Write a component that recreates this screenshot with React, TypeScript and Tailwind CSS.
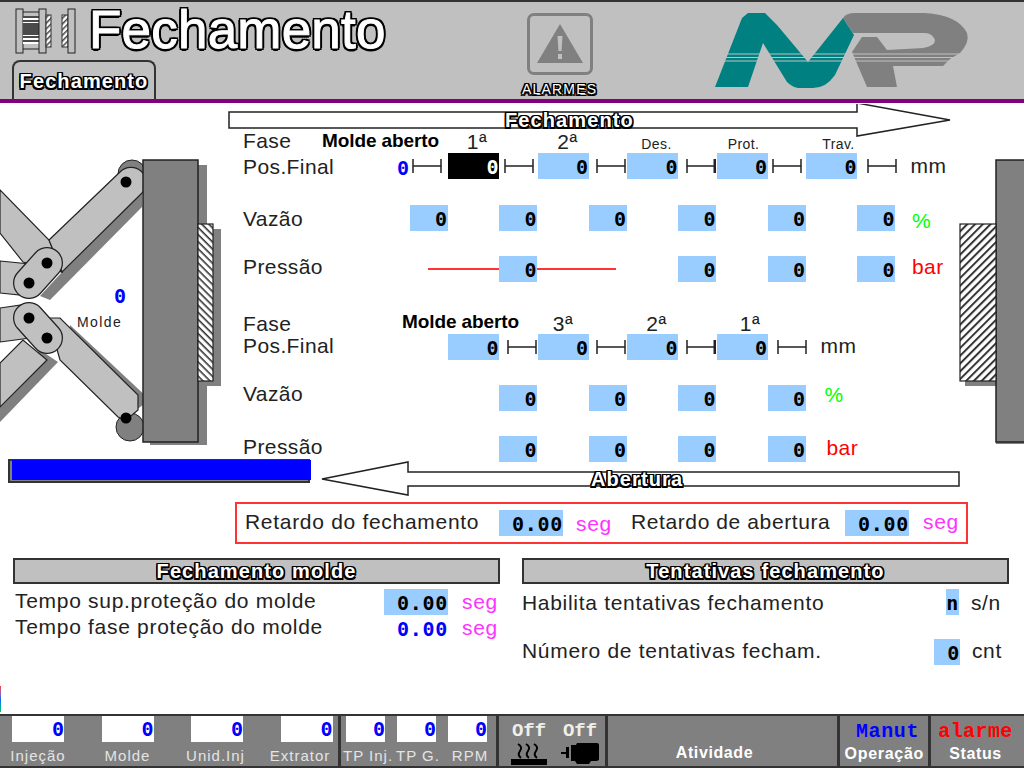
import React from 'react';

const outline = "text-white font-bold [text-shadow:-1.5px_0_#000,1.5px_0_#000,0_-1.5px_#000,0_1.5px_#000,-1.5px_-1.5px_#000,1.5px_-1.5px_#000,-1.5px_1.5px_#000,1.5px_1.5px_#000]";
const outlineBig = "text-white [-webkit-text-stroke:1px_#fff] [text-shadow:-2.5px_0_#000,2.5px_0_#000,0_-2.5px_#000,0_2.5px_#000,-2px_-2px_#000,2px_-2px_#000,-2px_2px_#000,2px_2px_#000]";
const mono = "font-['DejaVu_Sans_Mono',monospace] font-bold text-[20px] leading-none";

function Field({ value = '0', w = 'w-[38px]', dark = false }: { value?: string; w?: string; dark?: boolean }) {
  return (
    <div className={`${w} h-[26px] shrink-0 flex items-end justify-end pb-[2px] ${mono} ${dark ? 'bg-black text-white' : 'bg-[#99ccff] text-black'}`}>
      {value}
    </div>
  );
}

function Span({ thick = false, className = '' }: { thick?: boolean; className?: string }) {
  return (
    <svg width="30" height="14" viewBox="0 0 30 14" className={`shrink-0 ${className}`}>
      <path d="M1 0V14M1 7H29" stroke="#222" strokeWidth="1.5" fill="none" />
      <path d="M29 0V14" stroke="#222" strokeWidth={thick ? 3 : 1.5} fill="none" />
    </svg>
  );
}

function Row({ label, children, className = '' }: { label: React.ReactNode; children?: React.ReactNode; className?: string }) {
  return (
    <div className={`grid grid-cols-[166.5px_repeat(6,89.5px)] items-center text-[21px] leading-none tracking-[0.4px] text-[#222] ${className}`}>
      {label}
      {children}
    </div>
  );
}

function Cell({ children }: { children?: React.ReactNode }) {
  return <div className="flex items-center">{children}</div>;
}

function PhaseLabel({ text, className = '' }: { text: string; className?: string }) {
  return <div className={`ml-[38.5px] w-[51px] text-center whitespace-nowrap ${className}`}>{text}</div>;
}

function Diagram() {
  return (
    <svg className="absolute left-0 top-0" width="1024" height="400" viewBox="0 104 1024 400">
      <defs>
        <pattern id="hatchL" width="5" height="5" patternUnits="userSpaceOnUse" patternTransform="rotate(45)">
          <rect width="5" height="5" fill="#fff" />
          <rect width="5" height="1.6" fill="#333" />
        </pattern>
        <pattern id="hatchR" width="5.5" height="5.5" patternUnits="userSpaceOnUse" patternTransform="rotate(-45)">
          <rect width="5.5" height="5.5" fill="#fff" />
          <rect width="5.5" height="2" fill="#333" />
        </pattern>
      </defs>

      {/* Fechamento arrow */}
      <path d="M229 112H857V103L950 120L857 136V128H229Z" fill="#fff" stroke="#222" strokeWidth="1.5" />
      {/* Abertura arrow */}
      <path d="M959 472H408V462L322 479L408 495V486H959Z" fill="#fff" stroke="#222" strokeWidth="1.5" />

      {/* shadows */}
      <rect x="150" y="165" width="57" height="280" fill="#808080" />
      <rect x="205" y="229" width="16" height="157" fill="#808080" />
      <path d="M62 272L142 193V207L50 300L40 296Z" fill="#808080" />
      <path d="M68 362L122 420L150 400L70 325Z" fill="#808080" />
      <path d="M0 422L58 362L40 350L0 392Z" fill="#808080" />
      <circle cx="132" cy="174" r="14" fill="#808080" stroke="#222" />
      <circle cx="130" cy="427" r="14" fill="#808080" stroke="#222" />

      {/* back arms */}
      <path d="M0 190L49 240L62 272L23 262L0 233Z" fill="#c0c0c0" stroke="#222" strokeWidth="1.2" />
      <path d="M0 363L23 340L47 360L0 407Z" fill="#c0c0c0" stroke="#222" strokeWidth="1.2" />
      <path d="M0 261L30 264V296L0 293Z" fill="#c0c0c0" stroke="#222" strokeWidth="1.2" />
      <path d="M0 308L28 304L30 338L0 342Z" fill="#c0c0c0" stroke="#222" strokeWidth="1.2" />

      {/* long links */}
      <path d="M49 240L120 172A15 15 0 0 1 142 193L62 272Z" fill="#c0c0c0" stroke="#222" strokeWidth="1.2" />
      <path d="M48 318H60L138 395V410L126 420L118 417L60 360Z" fill="#c0c0c0" stroke="#222" strokeWidth="1.2" />

      {/* short links */}
      <line x1="47" y1="263" x2="29" y2="283" stroke="#222" strokeWidth="32" strokeLinecap="round" />
      <line x1="47" y1="263" x2="29" y2="283" stroke="#c0c0c0" strokeWidth="29.5" strokeLinecap="round" />
      <line x1="29" y1="318" x2="47" y2="338" stroke="#222" strokeWidth="32" strokeLinecap="round" />
      <line x1="29" y1="318" x2="47" y2="338" stroke="#c0c0c0" strokeWidth="29.5" strokeLinecap="round" />

      {/* pins */}
      <circle cx="126" cy="182" r="5.5" fill="#000" />
      <circle cx="47" cy="263" r="5.5" fill="#000" />
      <circle cx="29" cy="283" r="5.5" fill="#000" />
      <circle cx="29" cy="318" r="5.5" fill="#000" />
      <circle cx="47" cy="338" r="5.5" fill="#000" />
      <circle cx="126" cy="418" r="5.5" fill="#000" />

      {/* left platen */}
      <rect x="143" y="160" width="55" height="282" fill="#808080" stroke="#222" strokeWidth="1.5" />
      <rect x="198" y="224" width="15" height="157" fill="url(#hatchL)" stroke="#222" strokeWidth="1.2" />

      {/* right platen */}
      <rect x="965" y="381" width="32" height="5" fill="#808080" />
      <rect x="996" y="442" width="28" height="2" fill="#808080" />
      <rect x="996" y="160" width="30" height="282" fill="#808080" stroke="#222" strokeWidth="1.5" />
      <rect x="960" y="224" width="36" height="157" fill="url(#hatchR)" stroke="#222" strokeWidth="1.2" />
    </svg>
  );
}

function ToggleIcon() {
  return (
    <svg width="62" height="46" viewBox="0 0 62 46" className="shrink-0">
      <defs>
        <pattern id="hatchT" width="4" height="4" patternUnits="userSpaceOnUse" patternTransform="rotate(-45)">
          <rect width="4" height="4" fill="#fff" />
          <rect width="4" height="1.5" fill="#444" />
        </pattern>
      </defs>
      <rect x="1" y="1" width="7" height="44" fill="#c0c0c0" stroke="#222" />
      <rect x="8" y="8" width="16" height="28" fill="#fff" />
      <path d="M8 9H24M8 13H24M8 16H24M8 18H24M8 20H24M8 22H24M8 24H24M8 26H24M8 29H24M8 33H24" stroke="#111" strokeWidth="1.5" />
      <path d="M8 4H24M8 41H24" stroke="#222" />
      <rect x="24" y="1" width="7" height="44" fill="#c0c0c0" stroke="#222" />
      <rect x="31" y="7" width="5" height="32" fill="url(#hatchT)" stroke="#333" />
      <rect x="47" y="7" width="6" height="32" fill="url(#hatchT)" stroke="#333" />
      <rect x="53" y="1" width="7" height="44" fill="#c0c0c0" stroke="#222" />
      <path d="M60.5 1V45" stroke="#00c000" strokeWidth="1" />
    </svg>
  );
}

function Logo() {
  return (
    <svg width="256" height="80" viewBox="714 12 256 80" className="shrink-0">
      <path d="M843 18Q846 13 855 13H925Q958 15 967 33Q970 42 960 53L950 59L943 66H893L897 87H867L852 52L862 37H877L887 50L923 48Q935 46 935 40Q932 33 925 33H853Z" fill="#808080" />
      <path d="M715 87L742 18L748 13H765L777 25L808 62L843 18L854 35L835 75Q826 88 813 88H798Q792 87 787 82L763 43L748 87Z" fill="#008080" />
      <path d="M720 54H960M720 57.5H960M720 61H960" stroke="#c0c0c0" strokeWidth="1.2" />
    </svg>
  );
}

function HeaterIcon() {
  return (
    <svg width="36" height="22" viewBox="0 0 36 22" stroke="#000" fill="none" strokeWidth="2">
      <path d="M7 1Q12 4 9 8T10 15M15 1Q20 4 17 8T18 15M23 1Q28 4 25 8T26 15" />
      <rect x="0" y="17" width="36" height="4" fill="#000" />
    </svg>
  );
}

function MotorIcon() {
  return (
    <svg width="38" height="22" viewBox="0 0 38 22" fill="#000">
      <rect x="0" y="9" width="6" height="2" />
      <rect x="5" y="4" width="3" height="11" />
      <path d="M10 2H15L16 0H36Q38 0 38 2V16Q38 18 34 18H30L28 21H16L14 18H10Z" />
    </svg>
  );
}

function FooterField({ value, w, label, labelClass = '' }: { value: string; w: string; label: string; labelClass?: string }) {
  return (
    <div className={`${w} flex flex-col items-center shrink-0`}>
      <div className={`w-full h-[26px] bg-white flex items-center justify-end text-[#0000ff] ${mono}`}>{value}</div>
      <div className={`mt-[5px] whitespace-nowrap text-[15px] leading-[18px] tracking-[1px] text-[#e4e4e4] ${labelClass}`}>{label}</div>
    </div>
  );
}

function PanelHeader({ title }: { title: string }) {
  return (
    <div className="h-[26px] border-2 border-[#333] bg-[#c0c0c0] flex items-center justify-center">
      <span className={`${outline} text-[20px] leading-none tracking-[1.1px]`}>{title}</span>
    </div>
  );
}

export default function App() {
  return (
    <div className="w-[1024px] h-[768px] flex flex-col overflow-hidden bg-white font-['Liberation_Sans',sans-serif]">
      {/* header */}
      <header className="h-[104px] shrink-0 flex flex-col">
        <div className="h-[99px] bg-[#c0c0c0] border-t-2 border-[#333] flex">
          <div className="w-[522px] shrink-0 pl-[12px] flex flex-col">
            <div className="h-[58px] flex items-start pl-[3px] pt-[6px]">
              <ToggleIcon />
              <span className={`ml-[12px] -mt-[8px] ${outlineBig} text-[53px] leading-[60px] tracking-[0.2px]`}>Fechamento</span>
            </div>
            <div className="mt-auto w-[144px] h-[39px] border-2 border-b-0 border-[#333] rounded-t-[8px] flex items-center justify-center">
              <span className={`${outline} text-[20px] leading-none tracking-[1.1px]`}>Fechamento</span>
            </div>
          </div>
          <div className="w-[192px] shrink-0 flex flex-col">
            <div className="ml-[5px] mt-[11px] w-[66px] h-[62px] border-[3px] border-[#808080] rounded-[7px] flex items-center justify-center">
              <svg width="46" height="40" viewBox="0 0 46 40">
                <path d="M23 0L46 39H0Z" fill="#808080" />
                <path d="M20.5 12H25.5L24.5 27H21.5ZM21 30H25V35H21Z" fill="#c0c0c0" />
              </svg>
            </div>
            <span className={`mt-[7px] ${outline} font-normal text-[14px] leading-none tracking-[1.2px]`}>ALARMES</span>
          </div>
          <div className="pt-[10px]">
            <Logo />
          </div>
        </div>
        <div className="h-[4px] bg-[#800080]" />
      </header>

      {/* main */}
      <main className="relative flex-1">
        <Diagram />
        <span className={`absolute left-[505px] top-[5px] ${outline} text-[20px] leading-[22px] tracking-[1.1px]`}>Fechamento</span>
        <span className={`absolute left-[591px] top-[364px] ${outline} text-[20px] leading-[22px] tracking-[1.1px]`}>Abertura</span>
        <span className={`absolute left-[114px] top-[182px] text-[#0000ff] ${mono}`}>0</span>
        <span className="absolute left-[77px] top-[210px] text-[14px] leading-[16px] tracking-[1.4px] text-[#222]">Molde</span>
        <div className="absolute left-[8px] top-[355px] w-[302px] h-[24px] bg-[#808080] border-2 border-[#333]">
          <div className="ml-[2px] w-[299px] h-[20px] -mt-[1px] bg-[#0000ff]" />
        </div>
        <div className="absolute left-0 top-[582px] w-px h-[26px] bg-gradient-to-b from-red-500 via-blue-600 to-green-500" />

        <div className="relative pl-[243px] pt-[25px]">
          <Row label={<div className="flex items-center -mt-[2px]"><span className="w-[79px] shrink-0">Fase</span><span className="whitespace-nowrap font-bold text-[19px] tracking-[-0.1px] text-black">Molde aberto</span></div>} className="h-[24px]">
            <PhaseLabel text="1ª" className="pl-[7px]" />
            <PhaseLabel text="2ª" className="pl-[9px]" />
            <PhaseLabel text="Des." className="pl-[8px] text-[14px] pt-[5px]" />
            <PhaseLabel text="Prot." className="pl-[3px] text-[14px] pt-[5px]" />
            <PhaseLabel text="Trav." className="pl-[14px] text-[14px] pt-[5px]" />
          </Row>
          <Row label={<div className="flex items-center justify-between"><span>Pos.Final</span><span className={`text-[#0000ff] ${mono} pt-[3px]`}>0</span></div>} className="h-[26px]">
            <Cell><Span className="ml-[2.5px] mr-[6px]" /><Field w="w-[51px]" dark /></Cell>
            <Cell><Span className="ml-[4.5px] mr-[4px]" /><Field w="w-[51px]" /></Cell>
            <Cell><Span className="ml-[7px] mr-[1.5px]" /><Field w="w-[51px]" /></Cell>
            <Cell><Span thick className="ml-[8px] mr-[0.5px]" /><Field w="w-[51px]" /></Cell>
            <Cell><Span className="ml-[4px] mr-[4.5px]" /><Field w="w-[51px]" /></Cell>
            <Cell><Span className="ml-[9.5px]" /><span className="ml-[14px] -mt-[2px]">mm</span></Cell>
          </Row>
          <Row label={<span className="mt-[1px]">Vazão</span>} className="h-[26px] mt-[26px]">
            <Cell><Field /></Cell>
            <Cell><Field /></Cell>
            <Cell><Field /></Cell>
            <Cell><Field /></Cell>
            <Cell><Field /></Cell>
            <Cell><Field /><span className="ml-[17px] mt-[4px] text-[#00ff00]">%</span></Cell>
          </Row>
          <Row label={<span className="-mt-[6px]">Pressão</span>} className="h-[26px] mt-[25px]">
            <Cell><div className="ml-[18px] h-[2px] flex-1 bg-[#ff3333]" /></Cell>
            <Cell><Field /><div className="w-[79px] shrink-0 h-[2px] bg-[#ff3333]" /></Cell>
            <Cell />
            <Cell><Field /></Cell>
            <Cell><Field /></Cell>
            <Cell><Field /><span className="ml-[17px] -mt-[6px] text-[#ff0000]">bar</span></Cell>
          </Row>

          <Row label={<div className="flex items-center"><span className="w-[159px] shrink-0">Fase</span><span className="whitespace-nowrap font-bold text-[19px] tracking-[-0.1px] text-black -mt-[3px]">Molde aberto</span></div>} className="h-[22px] mt-[30px]">
            <div />
            <PhaseLabel text="3ª" />
            <PhaseLabel text="2ª" className="pl-[8px]" />
            <PhaseLabel text="1ª" className="pl-[16px]" />
          </Row>
          <Row label={<span className="-mt-[4px]">Pos.Final</span>} className="h-[25px]">
            <Cell><div className="ml-[38.5px]"><Field w="w-[51px]" /></div></Cell>
            <Cell><Span className="ml-[8px] mr-[0.5px]" /><Field w="w-[51px]" /></Cell>
            <Cell><Span className="ml-[7px] mr-[1.5px]" /><Field w="w-[51px]" /></Cell>
            <Cell><Span thick className="ml-[8px] mr-[0.5px]" /><Field w="w-[51px]" /></Cell>
            <Cell><Span className="ml-[9px]" /><span className="ml-[14px] -mt-[4px]">mm</span></Cell>
          </Row>
          <Row label={<span className="-mt-[10px]">Vazão</span>} className="h-[26px] mt-[26px]">
            <div />
            <Cell><Field /></Cell>
            <Cell><Field /></Cell>
            <Cell><Field /></Cell>
            <Cell><Field /><span className="ml-[19px] -mt-[8px] text-[#00ff00]">%</span></Cell>
          </Row>
          <Row label={<span className="-mt-[6px]">Pressão</span>} className="h-[25px] mt-[25px]">
            <div />
            <Cell><Field /></Cell>
            <Cell><Field /></Cell>
            <Cell><Field /></Cell>
            <Cell><Field /><span className="ml-[21px] -mt-[4px] text-[#ff0000]">bar</span></Cell>
          </Row>
        </div>

        {/* retardo box */}
        <div className="relative ml-[235px] mt-[41px] w-[733px] h-[42px] border-2 border-[#ff3333] pl-[8px] flex items-center text-[21px] leading-none tracking-[0.7px] text-[#222]">
          <span className="w-[254px] shrink-0 -mt-[3px]">Retardo do fechamento</span>
          <Field value="0.00" w="w-[64px]" />
          <span className="ml-[13px] w-[55px] shrink-0 text-[#ff33ff]">seg</span>
          <span className="w-[214px] shrink-0 -mt-[3px] tracking-[0.6px]">Retardo de abertura</span>
          <Field value="0.00" w="w-[64px]" />
          <span className="ml-[14px] -mt-[3px] text-[#ff33ff]">seg</span>
        </div>

        {/* bottom panels */}
        <div className="relative mt-[14px] pl-[13px] flex gap-[22px] text-[21px] leading-none tracking-[0.7px] text-[#222]">
          <section className="w-[487px]">
            <PanelHeader title="Fechamento molde" />
            <div className="mt-[5px] h-[26px] pl-[2px] flex items-center">
              <span className="w-[369px] shrink-0 -mt-[4px]">Tempo sup.proteção do molde</span>
              <Field value="0.00" w="w-[64px]" />
              <span className="ml-[14px] -mt-[2px] text-[#ff33ff]">seg</span>
            </div>
            <div className="h-[26px] pl-[2px] flex items-center">
              <span className="w-[369px] shrink-0 -mt-[4px]">Tempo fase proteção do molde</span>
              <div className={`w-[64px] h-[26px] shrink-0 flex items-end justify-end pb-[2px] text-[#0000ff] ${mono}`}>0.00</div>
              <span className="ml-[14px] -mt-[2px] text-[#ff33ff]">seg</span>
            </div>
          </section>
          <section className="w-[487px]">
            <PanelHeader title="Tentativas fechamento" />
            <div className="mt-[5px] h-[26px] flex items-center">
              <span>Habilita tentativas fechamento</span>
              <div className="ml-auto"><Field value="n" w="w-[13px]" /></div>
              <span className="ml-[12px] mr-[8px]">s/n</span>
            </div>
            <div className="mt-[24px] h-[26px] flex items-center">
              <span className="-mt-[4px]">Número de tentativas fecham.</span>
              <div className="ml-auto"><Field w="w-[26px]" /></div>
              <span className="ml-[12px] mr-[7px] -mt-[4px]">cnt</span>
            </div>
          </section>
        </div>
      </main>

      {/* footer */}
      <footer className="h-[54px] shrink-0 flex bg-[#808080] border-t-2 border-b-2 border-[#333]">
        <div className="w-[341px] shrink-0 pl-[12px] flex gap-[37.5px] border-r-[3px] border-[#333]">
          <FooterField value="0" w="w-[52px]" label="Injeção" />
          <FooterField value="0" w="w-[52px]" label="Molde" />
          <FooterField value="0" w="w-[52px]" label="Unid.Inj" labelClass="-ml-[3px]" />
          <FooterField value="0" w="w-[52px]" label="Extrator" labelClass="-ml-[13px]" />
        </div>
        <div className="w-[158px] shrink-0 pl-[5px] flex gap-[12px] border-r-[3px] border-[#333]">
          <FooterField value="0" w="w-[39px]" label="TP Inj." labelClass="ml-[5px]" />
          <FooterField value="0" w="w-[39px]" label="TP G." labelClass="ml-[3px]" />
          <FooterField value="0" w="w-[39px]" label="RPM" labelClass="ml-[5px]" />
        </div>
        <div className="w-[109px] shrink-0 pl-[11px] flex gap-[13px] border-r-[3px] border-[#333]">
          <div className="flex flex-col items-center w-[38px]">
            <span className="mt-[5px] font-['Liberation_Mono',monospace] font-bold text-[19px] leading-[20px] text-[#f0f0e8]">Off</span>
            <div className="mt-[2px]"><HeaterIcon /></div>
          </div>
          <div className="flex flex-col items-center w-[38px]">
            <span className="mt-[5px] font-['Liberation_Mono',monospace] font-bold text-[19px] leading-[20px] text-[#f0f0e8]">Off</span>
            <div className="mt-[2px]"><MotorIcon /></div>
          </div>
        </div>
        <div className="w-[232px] shrink-0 flex items-end justify-center pr-[16px] border-r-[3px] border-[#333] text-[16px] font-bold tracking-[0.6px] text-white">
          <span className="mb-[1px]">Atividade</span>
        </div>
        <div className="w-[91px] shrink-0 flex flex-col items-end border-r-[3px] border-[#333]">
          <span className="mt-[5px] mr-[9px] font-['Liberation_Mono',monospace] font-bold text-[20px] leading-[22px] tracking-[0.6px] text-[#0000ff]">Manut</span>
          <span className="mt-[2px] mr-[4px] text-[16px] font-bold leading-[18px] tracking-[0.7px] text-white">Operação</span>
        </div>
        <div className="flex-1 flex flex-col items-center pr-[4px]">
          <span className="mt-[5px] font-['Liberation_Mono',monospace] font-bold text-[20px] leading-[22px] tracking-[0.4px] text-[#ff0000]">alarme</span>
          <span className="mt-[2px] text-[16px] font-bold leading-[18px] tracking-[0.6px] text-white">Status</span>
        </div>
      </footer>
    </div>
  );
}
